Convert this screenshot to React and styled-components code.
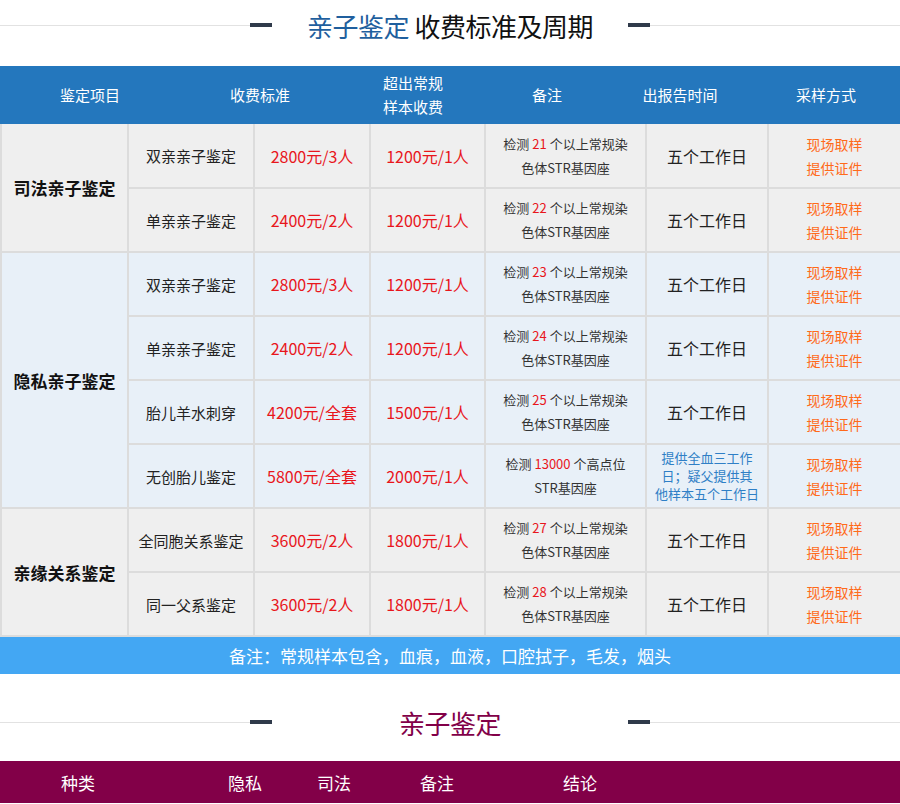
import React from "react";
import styled, { createGlobalStyle } from "styled-components";

const Global = createGlobalStyle`
  body { margin: 0; background: #fff; font-family: "Noto Sans CJK SC", "Liberation Sans", sans-serif; }
`;

const TitleBar = styled.div`
  position: relative;
  height: ${p => p.h}px;
  display: flex;
  align-items: center;
  justify-content: center;
  &::before {
    content: "";
    position: absolute;
    left: 0; right: 0; top: 50%;
    border-top: 1px solid #e2e2e2;
  }
`;

const TitleInner = styled.div`
  position: relative;
  display: flex;
  align-items: center;
  gap: 22px;
  background: #fff;
  width: 400px;
  justify-content: center;
`;

const Dash = styled.span`
  width: 22px;
  height: 4px;
  background: #2f3a4a;
`;

const TitleText = styled.div`
  flex: 1;
  text-align: center;
  font-size: 26px;
  color: ${p => p.color || "#111"};
  letter-spacing: -0.5px;
`;

const Blue = styled.span`
  color: #1f5f9e;
`;

const HeadBar = styled.div`
  margin-top: 16px;
  background: #2477bd;
  color: #fff;
  height: 58px;
  display: grid;
  grid-template-columns: 180px 160px 146px 122px 144px 148px;
  align-items: center;
  font-size: 15px;
  line-height: 24px;
  text-align: center;
`;

const Table = styled.table`
  width: 900px;
  border-collapse: collapse;
  table-layout: fixed;
  font-size: 15px;
  td { border: 2px solid #dcdcdc; text-align: center; padding: 0; }
  tr:first-child td { border-top: 0; }
`;

const Row = styled.tr`
  background: ${p => (p.alt ? "#e8f0f8" : "#efefef")};
  height: 64px;
  color: #222;
`;

const Group = styled.td`
  font-size: 17px;
  font-weight: bold;
  color: #111;
`;

const Price = styled.td`
  color: #e8161c;
  font-size: 16px;
`;

const Note = styled.td`
  font-size: 13px;
  line-height: 24px;
  color: #333;
  em { font-style: normal; color: #e8161c; }
`;

const Sample = styled.td`
  color: #ff6a1a;
  font-size: 14px;
  line-height: 24px;
`;

const Blurb = styled.td`
  color: #2f7fc6;
  font-size: 13px;
  line-height: 18px;
`;

const Days = styled.td`
  font-size: 16px;
`;

const Footnote = styled.div`
  background: #43a7f3;
  color: #fff;
  height: 37px;
  display: flex;
  align-items: center;
  justify-content: center;
  font-size: 17px;
`;

const SubHead = styled.div`
  margin-top: ${p => p.gap}px;
  background: #820048;
  color: #fff;
  height: 42px;
  display: grid;
  padding-left: 48px;
  grid-template-columns: 167px 89px 103px 143px 60px;
  align-items: center;
  font-size: 17px;
  span { width: 60px; text-align: center; }
`;

const Spacer = styled.div`
  height: ${p => p.h}px;
`;

const groups = [
  {
    name: "司法亲子鉴定",
    rows: [
      ["双亲亲子鉴定", "2800元/3人", "1200元/1人", "21"],
      ["单亲亲子鉴定", "2400元/2人", "1200元/1人", "22"],
    ],
  },
  {
    name: "隐私亲子鉴定",
    alt: true,
    rows: [
      ["双亲亲子鉴定", "2800元/3人", "1200元/1人", "23"],
      ["单亲亲子鉴定", "2400元/2人", "1200元/1人", "24"],
      ["胎儿羊水刺穿", "4200元/全套", "1500元/1人", "25"],
      ["无创胎儿鉴定", "5800元/全套", "2000元/1人", "13000", true],
    ],
  },
  {
    name: "亲缘关系鉴定",
    rows: [
      ["全同胞关系鉴定", "3600元/2人", "1800元/1人", "27"],
      ["同一父系鉴定", "3600元/2人", "1800元/1人", "28"],
    ],
  },
];

export default function App() {
  return (
    <>
      <Global />
      <TitleBar h={50}>
        <TitleInner>
          <Dash />
          <TitleText>
            <Blue>亲子鉴定</Blue> 收费标准及周期
          </TitleText>
          <Dash />
        </TitleInner>
      </TitleBar>
      <HeadBar>
        <span>鉴定项目</span>
        <span>收费标准</span>
        <span>超出常规<br />样本收费</span>
        <span>备注</span>
        <span>出报告时间</span>
        <span>采样方式</span>
      </HeadBar>
      <Table>
        <colgroup>
          <col style={{ width: 127 }} />
          <col style={{ width: 126 }} />
          <col style={{ width: 116 }} />
          <col style={{ width: 115 }} />
          <col style={{ width: 161 }} />
          <col style={{ width: 122 }} />
          <col style={{ width: 133 }} />
        </colgroup>
        <tbody>
          {groups.map(g =>
            g.rows.map((r, i) => (
              <Row key={g.name + i} alt={g.alt}>
                {i === 0 && <Group rowSpan={g.rows.length}>{g.name}</Group>}
                <td>{r[0]}</td>
                <Price>{r[1]}</Price>
                <Price>{r[2]}</Price>
                {r[4] ? (
                  <Note>检测 <em>{r[3]}</em> 个高点位<br />STR基因座</Note>
                ) : (
                  <Note>检测 <em>{r[3]}</em> 个以上常规染<br />色体STR基因座</Note>
                )}
                {r[4] ? (
                  <Blurb>提供全血三工作<br />日；疑父提供其<br />他样本五个工作日</Blurb>
                ) : (
                  <Days>五个工作日</Days>
                )}
                <Sample>现场取样<br />提供证件</Sample>
              </Row>
            ))
          )}
        </tbody>
      </Table>
      <Footnote>备注：常规样本包含，血痕，血液，口腔拭子，毛发，烟头</Footnote>
      <Spacer h={18} />
      <TitleBar h={60}>
        <TitleInner>
          <Dash />
          <TitleText color="#820048">亲子鉴定</TitleText>
          <Dash />
        </TitleInner>
      </TitleBar>
      <SubHead gap={9}>
        <span>种类</span>
        <span>隐私</span>
        <span>司法</span>
        <span>备注</span>
        <span>结论</span>
      </SubHead>
    </>
  );
}
